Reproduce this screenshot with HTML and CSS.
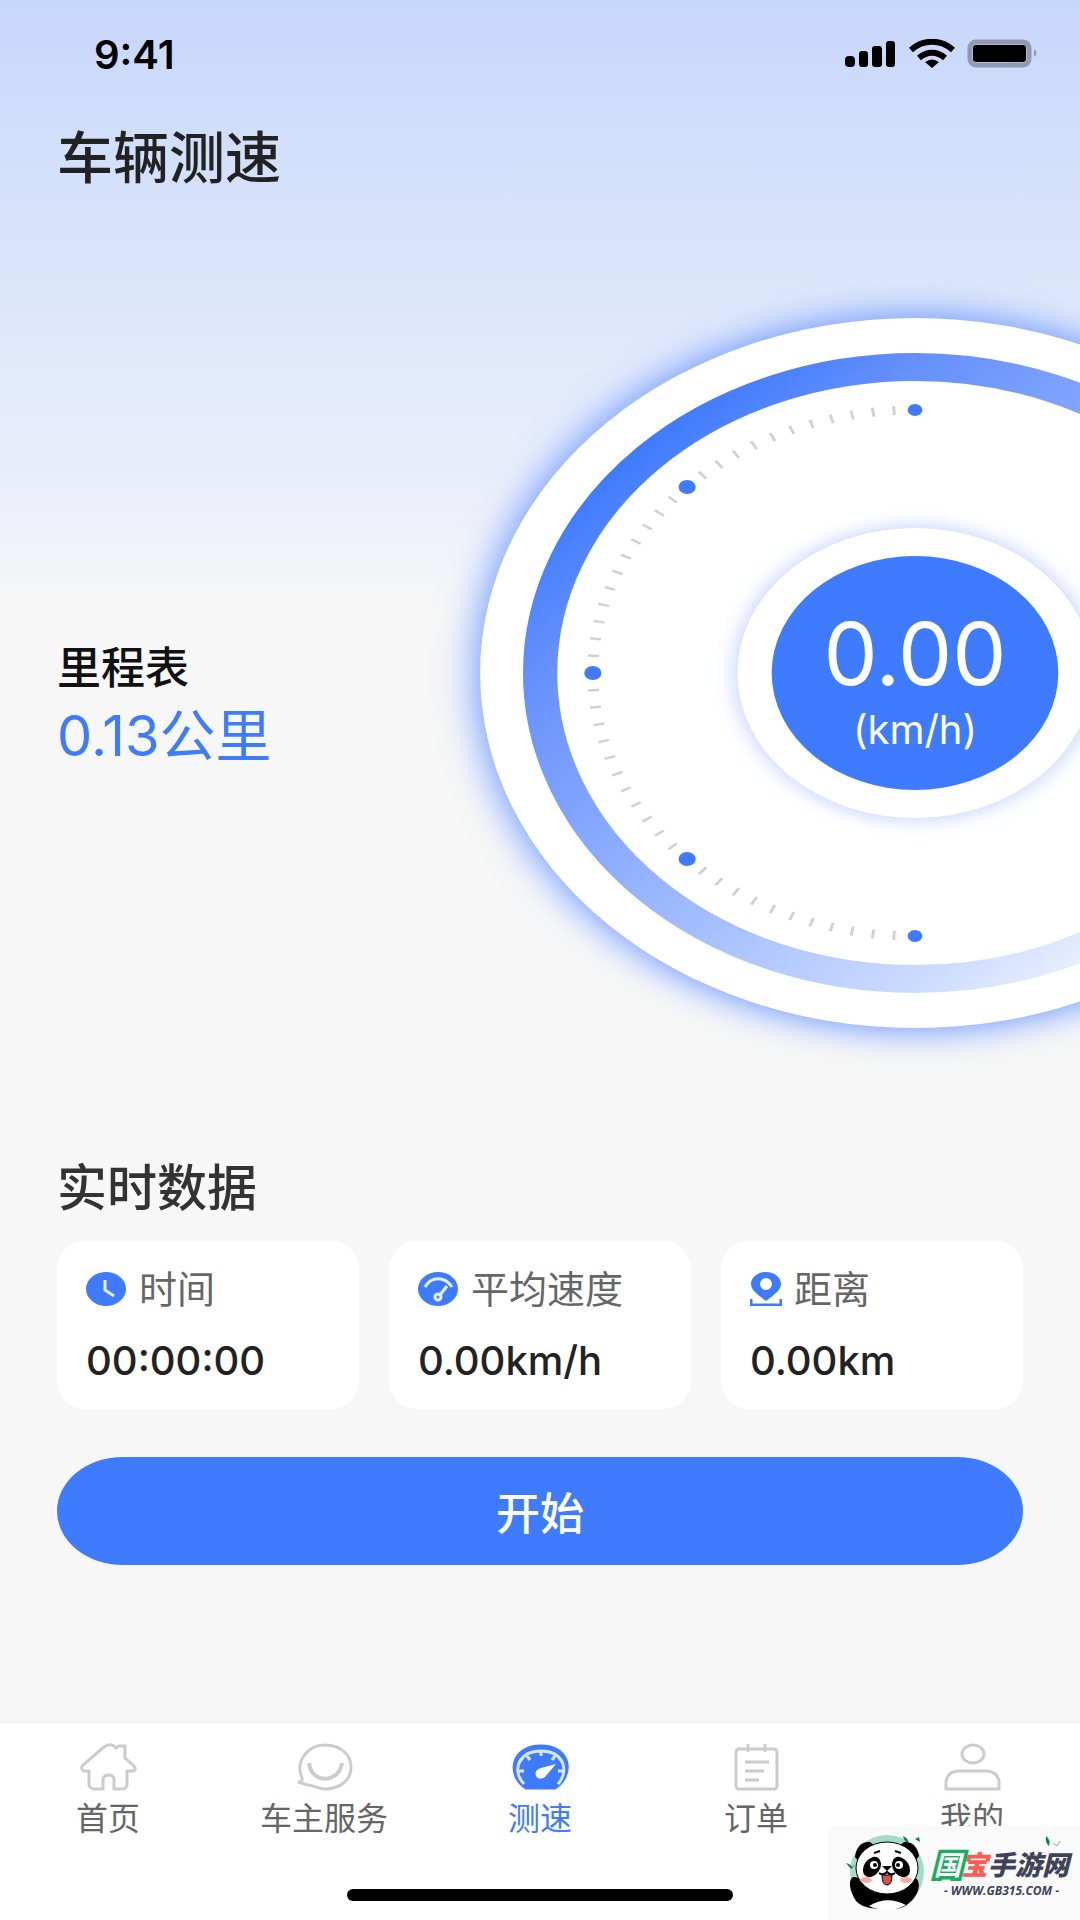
FILE: index.html
```html
<!doctype html>
<html lang="zh-CN">

<head>
<meta charset="utf-8">
<meta name="viewport" content="width=device-width, initial-scale=1">
<title>车辆测速</title>

<link rel="stylesheet" href="styles.css">

</head>

<body>

<div class="app">

  <div class="status-bar">
    <span class="clock">9:41</span>
    <svg class="status-icons" viewBox="0 0 196 30" aria-hidden="true">
      <!-- signal -->
      <rect x="1" y="17" width="10" height="11" rx="4"/>
      <rect x="15" y="12" width="9" height="16" rx="3"/>
      <rect x="28" y="7" width="10" height="21" rx="3"/>
      <rect x="42" y="2" width="9" height="26" rx="3"/>
      <!-- wifi -->
      <g fill="none" stroke="#000" stroke-width="6">
        <path d="M67 11 C79 0 97 0 109 11"/>
        <path d="M75 19 C83 12 93 12 101 19"/>
      </g>
      <path d="M81 23 Q88 18 95 23 L88 29 Z"/>
      <!-- battery -->
      <rect x="126" y="3" width="59" height="23" rx="6" fill="none" stroke="#8f99b4" stroke-width="5"/>
      <rect x="129" y="6" width="53" height="17" rx="3"/>
      <path d="M190 10 Q195 14 190 18 Z" fill="#8f99b4"/>
    </svg>
  </div>

  <main>
    <h1>车辆测速</h1>

    <section class="hero">
      <div class="mileage">
        <h2>里程表</h2>
        <p>0.13公里</p>
      </div>

      <div class="dial">
        <svg class="dial-face" viewBox="-435 -355 870 710" aria-hidden="true">
          <defs>
            <linearGradient id="ring" x1="0.13" y1="0.13" x2="0.87" y2="0.87">
              <stop offset="0" stop-color="#3e7bff"/>
              <stop offset="0.15" stop-color="#648ffc"/>
              <stop offset="0.5" stop-color="#97b5ff"/>
              <stop offset="0.85" stop-color="#ccdbff"/>
              <stop offset="1" stop-color="#eff3ff"/>
            </linearGradient>
            <filter id="glow" x="-20%" y="-20%" width="140%" height="140%">
              <feGaussianBlur stdDeviation="17"/>
            </filter>
            <filter id="soft-glow" x="-20%" y="-20%" width="140%" height="140%">
              <feGaussianBlur stdDeviation="9"/>
            </filter>
          </defs>
          <g transform="scale(1.225 1)">
            <circle r="358" fill="#6b95ff" filter="url(#glow)"/>
            <circle r="355" fill="#fff"/>
            <circle r="306" fill="none" stroke="url(#ring)" stroke-width="28"/>
            <!-- 12 steps between two dots -->
            <path class="ticks" d="M0 -263 A263 263 0 0 0 0 263" pathLength="48"/>
            <g fill="#3e7bff">
              <circle cx="0" cy="-263" r="6"/>
              <circle cx="-186" cy="-186" r="7"/>
              <circle cx="-263" cy="0" r="7"/>
              <circle cx="-186" cy="186" r="7"/>
              <circle cx="0" cy="263" r="6"/>
            </g>
            <circle r="147" fill="#c3d3ff" filter="url(#soft-glow)"/>
            <circle r="145" fill="#fff"/>
            <circle r="117" fill="#3e7bff"/>
          </g>
        </svg>
        <div class="readout">
          <span class="speed">0.00</span>
          <span class="unit">(km/h)</span>
        </div>
      </div>
    </section>

    <section class="realtime">
      <h2>实时数据</h2>
      <div class="cards">
        <div class="card">
          <h3>
            <svg width="41" height="34" viewBox="0 0 41 34" aria-hidden="true">
              <ellipse cx="20" cy="17" rx="20" ry="17" fill="#3e7bff"/>
              <path d="M19 8 V18 L28 24" fill="none" stroke="#e6eeff" stroke-width="3"/>
            </svg>
            时间
          </h3>
          <p>00:00:00</p>
        </div>
        <div class="card">
          <h3>
            <svg width="41" height="34" viewBox="0 0 41 34" aria-hidden="true">
              <ellipse cx="20" cy="17" rx="20" ry="17" fill="#3e7bff"/>
              <g fill="none" stroke="#e6eeff" stroke-width="3">
                <path d="M7 15 C13 4 27 4 34 15"/>
                <path d="M22 23 L29 14"/>
                <circle cx="20" cy="25" r="3"/>
              </g>
            </svg>
            平均速度
          </h3>
          <p>0.00km/h</p>
        </div>
        <div class="card">
          <h3>
            <svg width="32" height="34" viewBox="1 0 32 34" aria-hidden="true">
              <path fill="#3e7bff" fill-rule="evenodd" d="M17 0 C26 0 32 6 32 12 C32 18 25 23 17 29 C9 23 2 18 2 12 C2 6 8 0 17 0 Z M17 6 A6 6 0 1 0 17 18 A6 6 0 1 0 17 6 Z"/>
              <path d="M2 27 V33 H32 V27" fill="none" stroke="#3e7bff" stroke-width="3"/>
            </svg>
            距离
          </h3>
          <p>0.00km</p>
        </div>
      </div>
      <button class="start" type="button">开始</button>
    </section>
  </main>

  <footer>
    <nav class="tabs">
      <a href="#home">
        <svg viewBox="0 0 57 48" aria-hidden="true">
          <path d="M9 28 H4 Q0 26 3 22 L24 4 Q29 0 34 3 L36 5 L39 3 H45 V15 L54 23 Q57 27 53 28 H47 V42 Q46 46 42 46 H34 V36 Q33 32 29 32 Q24 32 23 36 V46 H15 Q10 46 9 42 Z"/>
        </svg>
        首页
      </a>
      <a href="#service">
        <svg viewBox="0 0 57 48" aria-hidden="true">
          <path d="M6 35 C-1 19 11 2 29 2 C45 2 55 12 55 24 C55 38 43 46 29 46 C22 46 18 42 12 42 L2 39 Q7 39 6 35 Z"/>
          <path d="M13 20 C15 41 43 41 46 20" stroke-width="4"/>
        </svg>
        车主服务
      </a>
      <a class="active" href="#speed">
        <svg viewBox="0 0 57 48" aria-hidden="true">
          <path d="M14 45 C-5 33 -2 3 29 3 C60 3 62 33 43 45 Z" fill="#3e7bff" stroke="#3e7bff"/>
          <path d="M12 41 C-1 27 7 8 29 8 C51 8 58 27 46 41" stroke="#dce7ff" stroke-width="3"/>
          <path d="M29 8 V13 M15 13 L18 17 M43 13 L40 17 M7 28 H12 M51 28 H46" stroke="#dce7ff" stroke-width="3"/>
          <path d="M44 21 L33 34 Q27 38 24 33 Q22 27 29 25 Z" fill="#fff" stroke="none"/>
        </svg>
        测速
      </a>
      <a href="#orders">
        <svg viewBox="0 0 57 48" aria-hidden="true">
          <rect x="8" y="6" width="41" height="40" rx="3"/>
          <path d="M20 1 V9 M37 1 V9 M17 19 H41 M17 28 H36 M17 37 H31"/>
        </svg>
        订单
      </a>
      <a href="#mine">
        <svg viewBox="0 0 57 48" aria-hidden="true">
          <ellipse cx="29" cy="11" rx="11" ry="9"/>
          <path d="M2 46 V38 Q4 28 15 28 H42 Q53 28 55 38 V46 Z"/>
        </svg>
        我的
      </a>
    </nav>
    <div class="home-indicator"></div>
  </footer>

</div>

<aside class="watermark">
  <svg class="panda" viewBox="0 0 84 78" aria-hidden="true">
    <circle cx="39" cy="38" r="37" fill="#a5dcc5"/>
    <path d="M8 67 C1 56 0 46 5 43 C12 42 15 49 17 53 H58 C59 46 64 42 69 45 C74 53 68 64 60 70 C54 75 47 75 39 75 C27 75 16 75 8 67 Z"/>
    <path d="M21 72 Q39 61 58 71 Q49 76 39 76 Q29 76 21 72 Z" fill="#fff"/>
    <path d="M7 23 C8 13 14 7 22 8 L28 13 L12 29 Z"/>
    <path d="M71 22 C70 13 64 7 56 8 L50 13 L66 29 Z"/>
    <ellipse cx="39" cy="34" rx="31" ry="26" fill="#fff" stroke="#000"/>
    <ellipse cx="24" cy="33" rx="8" ry="11" transform="rotate(35 24 33)"/>
    <ellipse cx="53" cy="33" rx="8" ry="11" transform="rotate(-35 53 33)"/>
    <circle cx="26" cy="31" r="4" fill="#fff"/>
    <circle cx="51" cy="31" r="4" fill="#fff"/>
    <circle cx="27" cy="31" r="2"/>
    <circle cx="50" cy="31" r="2"/>
    <ellipse cx="18" cy="46" rx="6" ry="3" fill="#ffaba4"/>
    <ellipse cx="58" cy="46" rx="6" ry="3" fill="#ffaba4"/>
    <path d="M34 32 H44 L39 37 Z"/>
    <path d="M26 19 L32 17 M47 17 L53 19 M31 39 Q35 42 39 38 Q43 42 47 39" fill="none" stroke="#000" stroke-width="2"/>
    <path d="M34 41 H44 Q44 51 39 51 Q34 51 34 41 Z" fill="#d9504b" stroke="#000"/>
    <g fill="#127c5a">
      <path d="M55 2 Q60 4 61 9 Q56 8 55 2 Z"/>
      <path d="M71 3 L72 8 L67 5 Z"/>
      <path d="M3 35 L-2 29 Q3 30 4 33 L8 30 Z"/>
    </g>
  </svg>
  <div class="brand">
    <svg class="leaves" viewBox="0 0 16 12" aria-hidden="true">
      <path d="M1 0 Q6 4 4 10 Q0 7 1 0 Z" fill="#127c5a"/>
      <path d="M8 7 L12 10 L15 5" fill="none" stroke="#8aa79c"/>
    </svg>
    <p class="brand-name"><span class="guo">国</span><span class="bao">宝</span>手游网</p>
    <p class="brand-url">- WWW.GB315.COM -</p>
  </div>
</aside>

</body>

</html>
```
FILE: styles.css
```css
* {
  box-sizing: border-box;
}

body {
  background-color: #f7f7f7;
  color: #222;
  font-family: Inter, "Noto Sans CJK SC", sans-serif;
  margin: 0;
}

h1,
h2,
h3,
p {
  margin: 0;
}

.app {
  background: linear-gradient(#c7d6fb 0, #d0defb 120px, #d9e4fa 250px, #eaeefb 480px, #f7f7f7 610px);
  display: flex;
  flex-direction: column;
  min-height: 100vh;
  overflow: hidden;
}

.status-bar {
  align-items: center;
  display: flex;
  height: 108px;
  justify-content: space-between;
  padding: 0 40px 0 94px;
}

.clock {
  color: #000;
  font-size: 40px;
  font-weight: 600;
}

.status-icons {
  height: 30px;
  width: 196px;
}

main {
  padding: 10px 57px 0;
}

h1 {
  font-size: 56px;
  font-weight: 500;
  line-height: 80px;
}

/* mileage on the left, dial runs off the right edge */
.hero {
  align-items: center;
  display: flex;
  justify-content: space-between;
  margin-right: -327px;
  margin-top: 120px;
}

.mileage {
  padding-top: 66px;
}

.mileage h2 {
  color: #111;
  font-size: 44px;
  font-weight: 500;
  line-height: 60px;
}

.mileage p {
  color: #3e7bff;
  font-size: 56px;
  line-height: 76px;
}

.dial {
  display: grid;
  flex: none;
  width: 870px;
}

.dial-face,
.readout {
  grid-area: 1 / 1;
}

.dial-face {
  display: block;
  overflow: visible;
  width: 100%;
}

.ticks {
  fill: none;
  stroke: #cfd1d8;
  stroke-dasharray: 0.14 0.86;
  stroke-dashoffset: 0.07;
  stroke-width: 9px;
}

.readout {
  align-items: center;
  color: #fff;
  display: flex;
  flex-direction: column;
  justify-content: center;
  padding-top: 30px;
}

.speed {
  font-size: 86px;
  line-height: 84px;
}

.unit {
  font-size: 40px;
  line-height: 68px;
}

.realtime {
  margin-top: 124px;
}

.realtime h2 {
  color: #333;
  font-size: 50px;
  font-weight: 500;
  line-height: 72px;
}

.cards {
  display: grid;
  gap: 30px;
  grid-template-columns: repeat(3, 1fr);
  margin-top: 17px;
}

.card {
  background-color: #fff;
  border-radius: 28px;
  padding: 26px 29px 22px;
}

.card h3 {
  align-items: center;
  color: #666;
  display: flex;
  font-size: 38px;
  font-weight: 400;
  gap: 12px;
  line-height: 44px;
}

.card p {
  font-size: 40px;
  font-weight: 500;
  line-height: 52px;
  margin-top: 24px;
}

.start {
  background-color: #3e7bff;
  border: 0;
  border-radius: 66px / 54px;
  color: #fff;
  display: block;
  font: 500 44px/108px "Noto Sans CJK SC", sans-serif;
  margin-top: 48px;
  padding: 0;
  width: 100%;
}

footer {
  background-color: #fff;
  border-top: 2px solid #f2f2f2;
  margin-top: auto;
  padding: 20px 0 19px;
}

.tabs {
  display: grid;
  grid-template-columns: repeat(5, 1fr);
}

.tabs a {
  align-items: center;
  color: #666;
  display: flex;
  flex-direction: column;
  font-size: 32px;
  gap: 6px;
  line-height: 44px;
  text-decoration: none;
}

.tabs a.active {
  color: #3e7bff;
}

.tabs svg {
  fill: none;
  height: 48px;
  stroke: #ccc;
  stroke-width: 3px;
  width: 57px;
}

.home-indicator {
  background-color: #000;
  border-radius: 6px;
  height: 12px;
  margin: 48px auto 0;
  width: 386px;
}

/* site badge over the bottom right corner */
.watermark {
  align-items: center;
  background-color: #fafafa;
  bottom: 0;
  display: flex;
  gap: 2px;
  height: 94px;
  padding-left: 20px;
  position: fixed;
  right: 0;
  width: 252px;
}

.panda {
  flex: none;
  height: 78px;
  overflow: visible;
  width: 84px;
}

.brand {
  color: #3d4359;
  font-family: "Noto Sans CJK SC", sans-serif;
  font-style: italic;
  font-weight: 900;
  position: relative;
}

.leaves {
  height: 12px;
  position: absolute;
  right: 8px;
  top: -10px;
  width: 16px;
}

.brand-name {
  font-size: 27px;
  line-height: 36px;
  white-space: nowrap;
}

.guo {
  color: #fff;
  font-weight: 700;
  paint-order: stroke fill;
  -webkit-text-stroke: 7px #18ae60;
}

.bao {
  color: #ff5a50;
}

.brand-url {
  font-family: "Open Sans", sans-serif;
  font-size: 12px;
  font-weight: 700;
  line-height: 18px;
  text-align: center;
  white-space: nowrap;
}
```
